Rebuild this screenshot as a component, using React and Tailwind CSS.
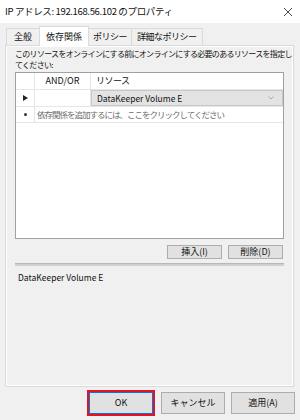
const font = { fontFamily: "'Noto Sans CJK JP', 'Liberation Sans', sans-serif" };

function Btn({ children, className = "" }) {
  return (
    <div
      className={`flex items-center justify-center bg-[#e1e1e1] border border-[#adadad] text-[9px] text-[#111] ${className}`}
    >
      {children}
    </div>
  );
}

export default function App() {
  return (
    <div className="w-[300px] h-[420px] bg-[#f0f0f0] flex flex-col text-[#111]" style={font}>
      {/* title bar */}
      <div className="h-[23px] bg-white flex items-center justify-between pl-[5px] pr-[6px]">
        <span className="text-[9.5px] tracking-[-0.35px]">IP アドレス: 192.168.56.102 のプロパティ</span>
        <svg width="10" height="10" viewBox="0 0 10 10" className="mr-[1px]">
          <path d="M1 1 L9 9 M9 1 L1 9" stroke="#333" strokeWidth="0.9" />
        </svg>
      </div>

      {/* tabs */}
      <div className="flex items-end h-[21px] pl-[6px] mt-[1px]">
        <div className="h-[17px] px-[7px] flex items-center text-[9px] border border-b-0 border-[#dadada] bg-[#f0f0f0]">全般</div>
        <div className="h-[20px] px-[6px] flex items-center text-[9px] border border-b-0 border-[#dadada] bg-white -ml-[1px] relative top-[1px] z-10">依存関係</div>
        <div className="h-[17px] px-[4px] flex items-center text-[9px] tracking-[-0.5px] border border-b-0 border-l-0 border-[#dadada] bg-[#f0f0f0]">ポリシー</div>
        <div className="h-[17px] px-[5px] flex items-center text-[9px] tracking-[-0.5px] border border-b-0 border-l-0 border-[#dadada] bg-[#f0f0f0]">詳細なポリシー</div>
      </div>

      {/* panel */}
      <div className="mx-[5px] w-[289px] h-[342px] border border-[#dadada] bg-white p-[1px]">
        <div className="w-full h-full bg-[#f0f0f0] flex flex-col px-[8px] pt-[1px]">
          <div className="text-[8px] leading-[11px] tracking-[-0.7px] whitespace-nowrap">
            このリソースをオンラインにする前にオンラインにする必要のあるリソースを指定し
            <br />
            てください:
          </div>

          {/* grid */}
          <div className="mt-[2px] h-[167px] bg-white border border-[#a0a0a0] flex flex-col text-[9px]">
            <div className="flex h-[17px] border-b border-[#e6e6e6]">
              <div className="w-[19px] border-r border-[#e6e6e6]" />
              <div className="w-[56px] border-r border-[#e6e6e6] flex items-center justify-center">AND/OR</div>
              <div className="flex-1 flex items-center pl-[5px] tracking-[-0.5px]">リソース</div>
            </div>
            <div className="flex h-[17px] border-b border-[#e6e6e6]">
              <div className="w-[19px] border-r border-[#e6e6e6] flex items-center justify-center">
                <svg width="5" height="6" viewBox="0 0 5 6"><path d="M0 0 L5 3 L0 6 Z" fill="#222" /></svg>
              </div>
              <div className="w-[56px] border-r border-[#e6e6e6]" />
              <div className="flex-1 flex items-center justify-between pl-[5px] pr-[8px] bg-[#e3e3e3] border border-[#c8c8c8]">
                <span className="text-[8.5px]">DataKeeper Volume E</span>
                <svg width="6" height="4" viewBox="0 0 6 4"><path d="M0.5 0.5 L3 3 L5.5 0.5" stroke="#999" strokeWidth="0.8" fill="none" /></svg>
              </div>
            </div>
            <div className="flex h-[16px] border-b border-[#e6e6e6]">
              <div className="w-[19px] border-r border-[#e6e6e6] flex items-center justify-center">
                <span className="w-[3px] h-[3px] rounded-full bg-[#333]" />
              </div>
              <div className="flex-1 flex items-center pl-[2px] text-[#6d6d6d] text-[8.5px] tracking-[-1px]">依存関係を追加するには、ここをクリックしてください</div>
            </div>
          </div>

          {/* insert / delete */}
          <div className="flex justify-end gap-[6px] mt-[6px] pr-[1px]">
            <Btn className="w-[55px] h-[14px]">挿入(I)</Btn>
            <Btn className="w-[55px] h-[14px]">削除(D)</Btn>
          </div>

          <div className="mt-[4px] h-[3px] bg-[#d0d0d0] border-t border-[#b8b8b8]" />
          <div className="mt-[5px] pl-[3px] text-[8.5px]">DataKeeper Volume E</div>
        </div>
      </div>

      {/* bottom buttons */}
      <div className="flex justify-end gap-[6px] pr-[5px] mt-[3px]">
        <div className="w-[68px] h-[26px] border-2 border-[#e81123] p-0">
          <div className="w-full h-full border border-[#0078d7] bg-[#e1e1e1] flex items-center justify-center text-[9px]">OK</div>
        </div>
        <Btn className="w-[64px] h-[22px] mt-[2px]">キャンセル</Btn>
        <Btn className="w-[64px] h-[22px] mt-[2px]">適用(A)</Btn>
      </div>
    </div>
  );
}
